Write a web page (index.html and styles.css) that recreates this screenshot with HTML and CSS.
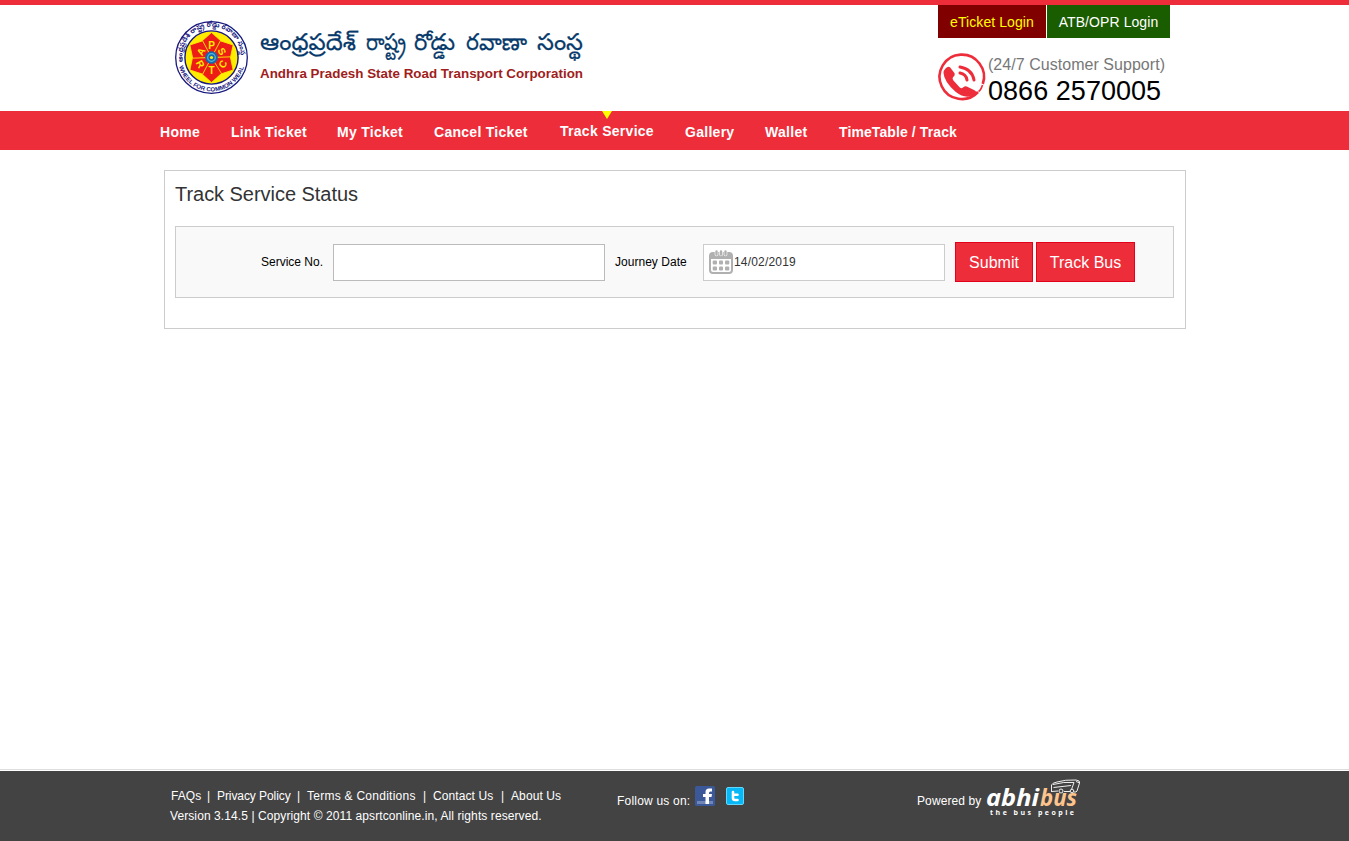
FILE: index.html
```html
<!DOCTYPE html>
<html lang="en">
<head>
<meta charset="utf-8">
<title>Track Service Status</title>
<link rel="stylesheet" href="styles.css">
</head>
<body>
<header class="header">
  <div class="brand">
    <svg class="seal" viewBox="0 0 74 74">
      <defs>
        <path id="ringTop" d="M8.200 41A29 29 0 1 1 64.800 41"/>
        <path id="ringBottom" d="M3.800 44.500A33.600 33.600 0 0 0 69.200 44.500"/>
        <path id="petal" d="M36.500 36.500L26.500 20.500L36.500 11.500L46.500 20.500Z"/>
      </defs>
      <circle cx="36.5" cy="36.5" r="35.8" fill="#fff" stroke="#18187f" stroke-width="1.3"/>
      <circle cx="36.5" cy="36.5" r="26.6" fill="#ffed00" stroke="#18187f" stroke-width="1.4"/>
      <g fill="#ee1c16" stroke="#ffed00" stroke-width=".8">
        <use href="#petal"/>
        <use href="#petal" transform="rotate(60 36.500 36.500)"/>
        <use href="#petal" transform="rotate(120 36.500 36.500)"/>
        <use href="#petal" transform="rotate(180 36.500 36.500)"/>
        <use href="#petal" transform="rotate(240 36.500 36.500)"/>
        <use href="#petal" transform="rotate(300 36.500 36.500)"/>
      </g>
      <g class="seal-letter">
        <text x="36.500" y="28">P</text>
        <text x="36.500" y="28" transform="rotate(60 36.500 36.500)">S</text>
        <text x="36.500" y="28" transform="rotate(-60 36.500 36.500)">A</text>
        <text x="25.500" y="46.700" transform="rotate(60 25.500 43)">R</text>
        <text x="36.500" y="53">T</text>
        <text x="47.500" y="46.700" transform="rotate(-60 47.500 43)">C</text>
      </g>
      <circle cx="36.5" cy="36.5" r="6.3" fill="#1769ab"/>
      <circle cx="36.5" cy="36.5" r="3.8" fill="none" stroke="#55b8df" stroke-width="1.2"/>
      <circle cx="36.5" cy="36.5" r="1.6" fill="#ffed00"/>
      <text class="ring-te"><textPath href="#ringTop" textLength="97" lengthAdjust="spacingAndGlyphs">ఆంధ్రప్రదేశ్ రాష్ట్ర రోడ్డు రవాణా సంస్థ</textPath></text>
      <text class="ring-en"><textPath href="#ringBottom" startOffset="1" textLength="87" lengthAdjust="spacingAndGlyphs">WHEEL FOR COMMON WEAL</textPath></text>
    </svg>
    <svg class="brand-name" viewBox="0 0 330 62">
      <g class="name-te">
        <text x="0" y="26" textLength="96" lengthAdjust="spacingAndGlyphs">ఆంధ్రప్రదేశ్</text>
        <text x="106" y="26" textLength="40" lengthAdjust="spacingAndGlyphs">రాష్ట్ర</text>
        <text x="154" y="26" textLength="41" lengthAdjust="spacingAndGlyphs">రోడ్డు</text>
        <text x="206" y="26" textLength="61" lengthAdjust="spacingAndGlyphs">రవాణా</text>
        <text x="277" y="26" textLength="46" lengthAdjust="spacingAndGlyphs">సంస్థ</text>
      </g>
      <text class="name-en" x="0" y="54" textLength="323" lengthAdjust="spacingAndGlyphs">Andhra Pradesh State Road Transport Corporation</text>
    </svg>
  </div>
  <div class="header-side">
    <div class="logins"><a class="login eticket">eTicket Login</a><a class="login atb">ATB/OPR Login</a></div>
    <div class="support">
      <svg class="phone" viewBox="1 -1 48 48">
        <path d="M41 37A22.200 22.200 0 1 1 45.800 29" fill="none" stroke="#ee2d3b" stroke-width="2.6"/>
        <path d="M45.500 30Q44 35 41.500 36.500M38.800 37.500Q38.500 40.500 35.500 41" fill="none" stroke="#ee2d3b" stroke-width="1.6"/>
        <path d="M8.500 13.5Q11 10.8 13 12.3L17.6 18.2Q18.5 20 16 22.3Q15 23.5 16.2 25.2L22.8 32.6Q24.5 34 26 32.5Q28.3 30.5 30.3 31.7L38 35.5Q40.500 37.500 37.500 39.4Q29 45 18.5 36.8Q7 26.5 6.5 18Q6.4 15.5 8.5 13.5Z" fill="#ee2d3b"/>
        <g fill="none" stroke="#ee2d3b" stroke-width="3" stroke-linecap="round"><path d="M23 18Q29 19 30 25"/><path d="M23 12Q35 14 37 25"/></g>
      </svg>
      <div class="support-text"><div class="support-label">(24/7 Customer Support)</div><div class="support-number">0866 2570005</div></div>
    </div>
  </div>
</header>
<nav class="nav">
  <a>Home</a><a>Link Ticket</a><a>My Ticket</a><a>Cancel Ticket</a><a class="active">Track Service</a><a>Gallery</a><a>Wallet</a><a class="timetable">TimeTable / Track</a>
</nav>
<main class="panel">
  <h1 class="title">Track Service Status</h1>
  <form class="search">
    <label class="service-label">Service No.</label>
    <div class="field service"></div>
    <label class="date-label">Journey Date</label>
    <div class="field date">
      <svg class="calendar" viewBox="0 0 24 24">
        <rect x="1" y="3" width="22" height="20" rx="3" fill="#fff" stroke="#b0b0b0" stroke-width="2"/>
        <path d="M1 9V5Q1 3 4 3H20Q23 3 23 5V9Z" fill="#b0b0b0"/>
        <g stroke="#fff" stroke-width="3.600" stroke-linecap="round"><path d="M7.500 1V4.500M16.500 1V4.500M12 1V4.500"/></g>
        <g stroke="#b0b0b0" stroke-width="2.400" stroke-linecap="round"><path d="M7.500 1.500V4.500M12 1.500V4.500M16.500 1.500V4.500"/></g>
        <g fill="#b0b0b0"><rect x="3.700" y="10.500" width="4.300" height="4" rx="1"/><rect x="10" y="10.500" width="4" height="4" rx="1"/><rect x="16" y="10.500" width="4.300" height="4" rx="1"/><rect x="3.700" y="16.500" width="4.300" height="4" rx="1"/><rect x="10" y="16.500" width="4" height="4" rx="1"/><rect x="16" y="16.500" width="4.300" height="4" rx="1"/></g>
      </svg>
      <span>14/02/2019</span>
    </div>
    <button class="button submit" type="button">Submit</button>
    <button class="button track" type="button">Track Bus</button>
  </form>
</main>
<footer class="footer">
  <div class="legal">
    <div class="links"><a>FAQs</a><i>|</i><a>Privacy Policy</a><i>|</i><a class="terms">Terms &amp; Conditions</a><i>|</i><a>Contact Us</a><i>|</i><a>About Us</a></div>
    <div class="copyright">Version 3.14.5 | Copyright © 2011 apsrtconline.in, All rights reserved.</div>
  </div>
  <div class="follow"><span class="follow-text">Follow us on:</span>
    <svg class="facebook" viewBox="0 0 20 20"><rect width="20" height="20" rx="1.500" fill="#3b5998"/><path d="M2 15H18V18H2Z" fill="#7086b8"/><path d="M10.500 18V11H8V8H10.500V6Q10.500 2.500 14 2.500H17V5.500H15.500Q14 5.500 14 7V8H17L16.500 11H14V18Z" fill="#fff"/></svg>
    <svg class="twitter" viewBox="0 0 20 20"><rect x="1.500" y="1.500" width="17" height="17" rx="1.500" fill="#08b7f5" stroke="#62d8ff"/><path d="M8 6V12Q8 14 10 14H12.500M8 8.800H12.500" fill="none" stroke="#fff" stroke-width="2.600" stroke-linecap="round"/></svg>
  </div>
  <div class="powered"><span class="powered-text">Powered by</span>
    <svg class="abhibus" viewBox="0 0 96 40">
      <text class="abhi" x="0" y="27" textLength="53" lengthAdjust="spacingAndGlyphs">abhi</text>
      <text class="bus" x="54" y="27" textLength="37" lengthAdjust="spacingAndGlyphs">bus</text>
      <text class="tagline" x="4" y="36" textLength="84">the bus people</text>
      <g fill="none" stroke="#eee" stroke-width="1"><path d="M65.500 13V6Q66 4 71 3Q79 .5 90 1Q94.500 1.500 93.500 4L91 12Q90.500 13.500 88 13M65.500 12.500L72 12M78 12.500H84M67 5.500Q78 2.500 88 3.500M67.500 8.500L85 6.500M88 3.500L85.500 10.500M90 2.500L94 4"/><circle cx="75" cy="12" r="2"/><circle cx="86" cy="12" r="1.800"/></g>
    </svg>
  </div>
</footer>
</body>
</html>
```
FILE: styles.css
```css
* { box-sizing: border-box; }
body { margin: 0; height: 841px; display: flex; flex-direction: column; background: #fff; font: 12px "Liberation Sans", Arial, sans-serif; color: #000; overflow: hidden; }
svg { display: block; flex: none; overflow: visible; }
a, span, label { white-space: nowrap; }
.header { height: 111px; flex: none; border-top: 5px solid #ee2d3b; display: flex; padding-left: 175px; }
.brand { width: 763px; display: flex; padding-top: 16px; }
.seal { width: 74px; height: 74px; }
.brand-name { width: 330px; height: 62px; margin: 3px 0 0 11px; }
.seal-letter { font: bold 10px "Liberation Sans", sans-serif; fill: #ffed00; text-anchor: middle; }
.ring-te { font: bold 7px "Noto Sans Telugu", "Noto Sans", sans-serif; fill: #18187f; }
.ring-en { font: bold 6px "Liberation Sans", sans-serif; fill: #18187f; }
.name-te { font: 400 23px "Noto Sans Telugu", "Noto Sans", sans-serif; fill: #073a6b; stroke: #073a6b; stroke-width: .25px; }
.name-en { font: bold 13.500px "Liberation Sans", sans-serif; fill: #a01d20; }
.logins { display: flex; gap: 1px; }
.login { height: 33px; line-height: 34px; text-align: center; font-size: 14px; letter-spacing: .08px; }
.eticket { width: 108px; background: #800000; color: #ff0; }
.atb { width: 123px; background: #1a5c00; color: #fff; }
.support { display: flex; padding-top: 16px; }
.phone { width: 48px; height: 48px; }
.support-text { padding-left: 2px; }
.support-label { color: #777; font-size: 16px; line-height: 22px; letter-spacing: .04px; white-space: nowrap; }
.support-number { font-size: 27px; line-height: 30px; letter-spacing: .04px; white-space: nowrap; }
.nav { height: 39px; flex: none; background: #ee2d3b; padding-left: 160px; display: grid; grid-template-columns: 71px 106px 97px 126px 125px 80px 74px 130px; font-size: 14px; font-weight: bold; letter-spacing: .28px; line-height: 42px; color: #fff; }
.timetable { letter-spacing: .1px; }
.active { position: relative; line-height: 40px; }
.active::before { content: ""; position: absolute; left: 42px; top: 0; border: 5px solid transparent; border-top: 8px solid #ff0; border-bottom: 0; }
.panel { width: 1022px; height: 159px; flex: none; margin: 20px 0 0 164px; border: 1px solid #ccc; padding: 10px; }
.title { margin: 0; color: #333; font-size: 20px; font-weight: normal; line-height: 26px; letter-spacing: -.04px; }
.search { width: 999px; height: 72px; margin-top: 19px; border: 1px solid #ccc; background: #f9f9f9; display: flex; align-items: center; padding-left: 85px; }
.service-label { width: 72px; }
.field { height: 37px; border: 1px solid #bbb; background: #fff; }
.service { width: 272px; margin-right: 10px; }
.date-label { width: 88px; letter-spacing: .03px; }
.date { width: 242px; display: flex; align-items: center; gap: 1px; padding-left: 5px; margin-right: 10px; border-color: #ccc; color: #333; letter-spacing: .18px; }
.calendar { width: 24px; height: 24px; }
.button { height: 40px; padding: 0; border: 1px solid #e2001a; background: #ee2d3b; color: #fff; font: 16px "Liberation Sans", Arial, sans-serif; line-height: 40px; }
.submit { width: 78px; margin-right: 3px; }
.track { width: 99px; }
.footer { height: 70px; flex: none; margin-top: auto; background: #434343; box-shadow: 0 -1px #fff, 0 -2px #ddd; color: #fff; display: flex; padding-left: 170px; }
.legal { width: 447px; padding-top: 15px; line-height: 20px; }
.links { display: grid; grid-template-columns: 29px 17px 73px 17px 109px 17px 61px 17px 50px; padding-left: 1px; letter-spacing: .1px; }
.links a:nth-of-type(2) { letter-spacing: -.08px; }
.links .terms { letter-spacing: .26px; }
.links i { font-style: normal; text-align: center; }
.copyright { white-space: nowrap; letter-spacing: .09px; }
.follow { width: 300px; display: flex; padding-top: 15px; }
.follow-text { width: 78px; padding-top: 8px; letter-spacing: .2px; }
.facebook, .twitter { width: 20px; height: 20px; }
.twitter { margin-left: 10px; }
.powered { display: flex; padding-top: 8px; }
.powered-text { width: 69px; padding-top: 15px; letter-spacing: .1px; }
.abhibus { width: 96px; height: 40px; }
.abhi, .bus { font: italic bold 24px "Open Sans", sans-serif; fill: #fff; }
.bus { fill: #fdc48d; }
.tagline { font: bold 7px "Open Sans", sans-serif; fill: #fff; }
```
